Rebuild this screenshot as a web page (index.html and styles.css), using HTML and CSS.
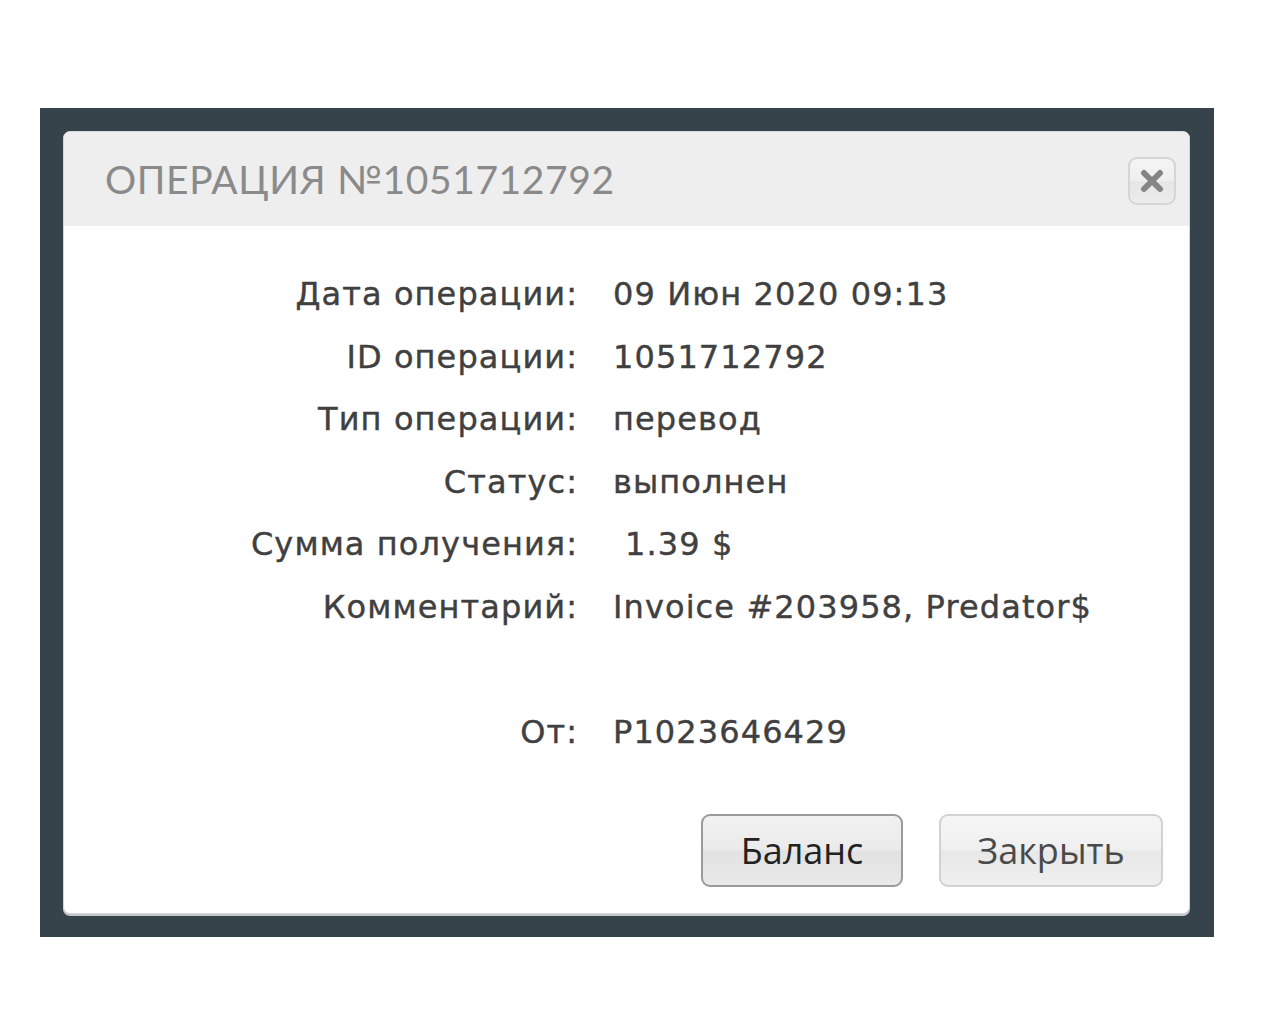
FILE: index.html
```html
<!DOCTYPE html>
<html lang="ru">
<head>
<meta charset="utf-8">
<title>Операция №1051712792</title>
<link rel="stylesheet" href="styles.css">
</head>
<body>
<div class="backdrop">
  <div class="modal">
    <div class="modal-header">
      <h1 class="modal-title">ОПЕРАЦИЯ №1051712792</h1>
      <button class="close-btn" aria-label="Закрыть">
        <svg width="24" height="24" viewBox="0 0 24 24"><path d="M4 4 L20 20 M20 4 L4 20" stroke="#858585" stroke-width="6" stroke-linecap="round"/></svg>
      </button>
    </div>
    <div class="modal-body">
      <div class="details">
        <div class="label">Дата операции:</div><div class="value">09 Июн 2020 09:13</div>
        <div class="label">ID операции:</div><div class="value">1051712792</div>
        <div class="label">Тип операции:</div><div class="value">перевод</div>
        <div class="label">Статус:</div><div class="value">выполнен</div>
        <div class="label">Сумма получения:</div><div class="value amount">1.39 $</div>
        <div class="label">Комментарий:</div><div class="value">Invoice #203958, Predator$</div>
        <div class="label"></div><div class="value"></div>
        <div class="label">От:</div><div class="value">P1023646429</div>
      </div>
    </div>
    <div class="modal-footer">
      <button class="btn btn-primary">Баланс</button>
      <button class="btn btn-secondary">Закрыть</button>
    </div>
  </div>
</div>
</body>
</html>
```

FILE: styles.css
```css
html, body {
  margin: 0;
  padding: 0;
  background: #ffffff;
}

body {
  padding: 108px 0 0 40px;
}

.backdrop {
  width: 1174px;
  height: 829px;
  box-sizing: border-box;
  background: #37434a;
  padding: 23px 24px 23px 23px;
}

.modal {
  width: 1127px;
  height: 783px;
  box-sizing: border-box;
  background: #ffffff;
  border: 1px solid #d4d6d8;
  border-radius: 7px;
  box-shadow: 0 2px 0 #c4c6c8;
  display: flex;
  flex-direction: column;
  overflow: hidden;
}

.modal-header {
  height: 94px;
  flex: none;
  background: #eeeeee;
  display: flex;
  align-items: center;
  justify-content: space-between;
  padding: 0 13px 0 41px;
}

.modal-title {
  margin: 0;
  font-family: "Lato", "Liberation Sans", sans-serif;
  font-weight: 400;
  font-size: 39px;
  letter-spacing: 0.6px;
  color: #8a8a8a;
}

.close-btn {
  width: 48px;
  height: 48px;
  border: 2px solid #d5d5d5;
  border-radius: 9px;
  background: linear-gradient(#f4f4f4 0%, #efefef 50%, #e6e6e6 52%, #ececec 100%);
  display: flex;
  align-items: center;
  justify-content: center;
  padding: 0;
  margin-top: 4px;
}

.modal-body {
  flex: 1;
  padding-top: 37px;
}

.details {
  display: grid;
  grid-template-columns: 513px 1fr;
  column-gap: 36px;
  grid-auto-rows: 62.6px;
  font-family: "DejaVu Sans", sans-serif;
  font-size: 32px;
  letter-spacing: 1.1px;
  color: #404040;
  -webkit-text-stroke: 0.4px #404040;
  line-height: 62px;
}

.label {
  text-align: right;
  margin-right: -1.1px;
}

.value.amount {
  padding-left: 12px;
}

.modal-footer {
  flex: none;
  display: flex;
  justify-content: flex-end;
  gap: 36px;
  padding: 0 26px 26px 0;
}

.btn {
  height: 73px;
  border-radius: 9px;
  font-family: "Open Sans", sans-serif;
  font-size: 36px;
  padding: 0;
  background: linear-gradient(#f1f1f1 0%, #ebebeb 48%, #e2e2e2 52%, #e9e9e9 100%);
}

.btn-primary {
  width: 202px;
  border: 2px solid #9a9a9a;
  color: #222222;
}

.btn-secondary {
  width: 224px;
  border: 2px solid #d2d2d2;
  color: #4a4a4a;
  background: linear-gradient(#f5f5f5 0%, #f0f0f0 48%, #e8e8e8 52%, #efefef 100%);
}
```
